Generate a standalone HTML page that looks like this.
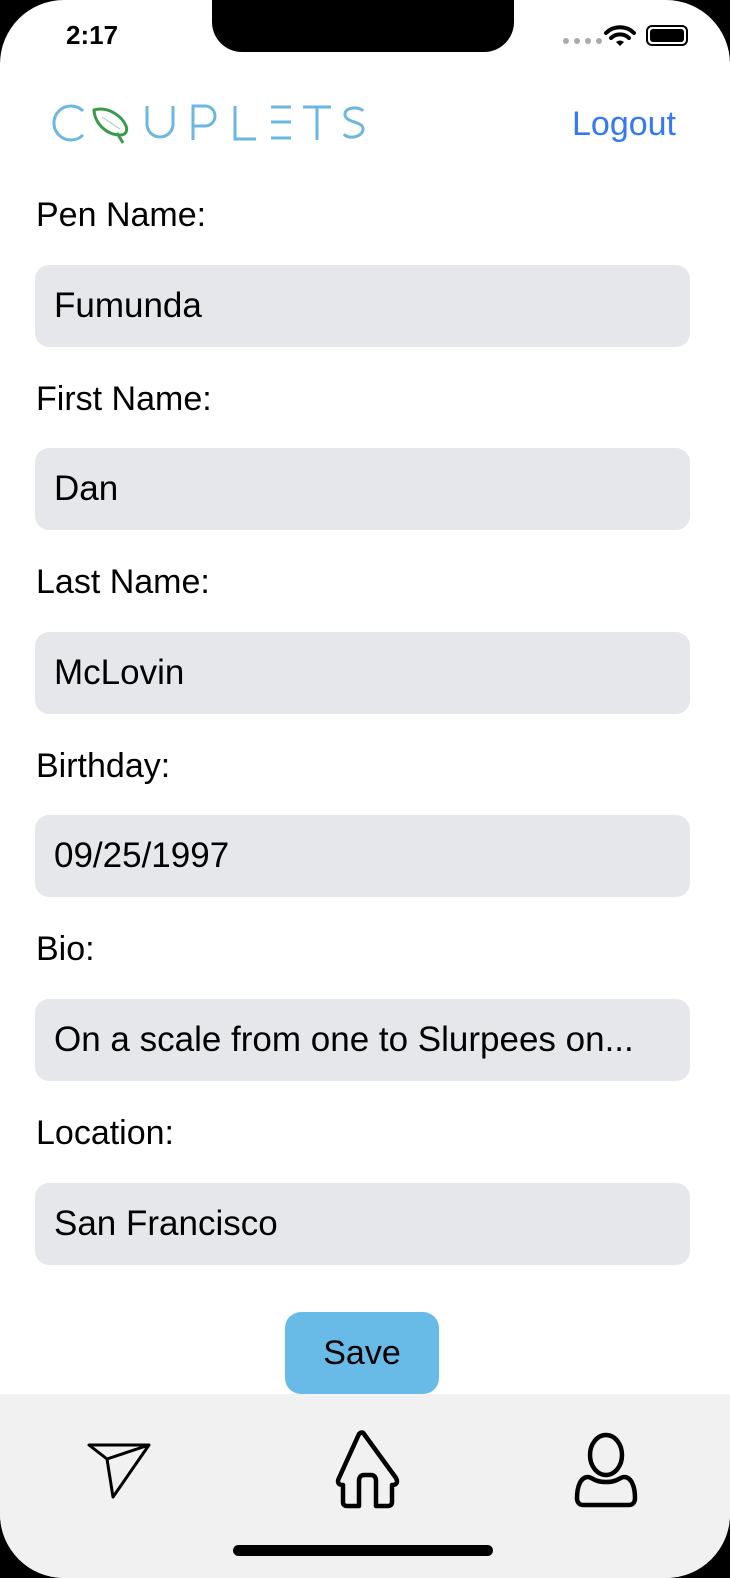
<!DOCTYPE html>
<html><head><meta charset="utf-8"><style>
*{margin:0;padding:0;box-sizing:border-box}
html,body{width:730px;height:1578px;background:#000;overflow:hidden}
.screen{position:absolute;left:0;top:0;width:730px;height:1578px;background:#fff;border-radius:64px;overflow:hidden;font-family:"Liberation Sans",sans-serif}
.notch{position:absolute;left:212px;top:-2px;width:302px;height:54px;background:#000;border-radius:0 0 30px 30px}
.time{position:absolute;left:66px;top:20px;font-size:26px;font-weight:bold;color:#000}
.lbl{position:absolute;left:36px;font-size:34px;color:#000}
.fld{position:absolute;left:35px;width:655px;height:82px;background:#e6e7ea;border-radius:14px;font-size:35px;color:#000;padding-left:19px;line-height:82px;white-space:nowrap}
.logout{position:absolute;left:572px;top:105px;font-size:34px;color:#3478f6}
.save{position:absolute;left:285px;top:1312px;width:154px;height:82px;background:#68bbe6;border-radius:16px;font-size:34px;line-height:82px;text-align:center;color:#000}
.tab{position:absolute;left:0;top:1394px;width:730px;height:184px;background:#f1f1f1}
.bar{position:absolute;left:233px;top:1545px;width:260px;height:11px;background:#000;border-radius:6px}
</style></head><body><div class="screen">
<div class="notch"></div>
<div class="time">2:17</div>
<div style="position:absolute;left:563px;top:38px;display:flex;gap:5px"><i style="width:6px;height:6px;background:#aaa;border-radius:3px"></i><i style="width:6px;height:6px;background:#aaa;border-radius:3px"></i><i style="width:6px;height:6px;background:#aaa;border-radius:3px"></i><i style="width:6px;height:6px;background:#aaa;border-radius:3px"></i></div>
<svg style="position:absolute;left:604px;top:24px" width="32" height="24" viewBox="0 0 32 24"><path d="M2 9a20 20 0 0 1 28 0" stroke="#000" stroke-width="4" fill="none" stroke-linecap="round"/><path d="M7 14a13 13 0 0 1 18 0" stroke="#000" stroke-width="4" fill="none" stroke-linecap="round"/><path d="M16 22l-4-4a6 6 0 0 1 8 0z" fill="#000"/></svg>
<div style="position:absolute;left:646px;top:25px;width:42px;height:21px;border:2px solid #000;border-radius:6px;padding:2px"><div style="width:100%;height:100%;background:#000;border-radius:3px"></div></div>
<svg style="position:absolute;left:0;top:0" width="400" height="160" viewBox="0 0 400 160">
<g fill="none" stroke="#6db6e2" stroke-width="3">
<path d="M83 111a17 17 0 1 0 0 24"/>
<path d="M147 106v18a13 13 0 0 0 26 0V106"/>
<path d="M193 140V106h12a10 10 0 0 1 0 20h-12"/>
<path d="M235 106v33h21"/>
<path d="M271 107h20M271 122h20M271 138h20"/>
<path d="M303 107h28M317 107v33"/>
<path d="M363 111c-4-5-19-4-18 4s18 6 18 14-15 11-19 5"/>
</g>
<path d="M94 110c14-4 28 6 32 16 2 6-1 9-6 9-12 0-25-10-26-25z M117 133l6 10" fill="none" stroke="#3a9a48" stroke-width="3"/>
<path d="M102 117l18 12" stroke="#9fcfa6" stroke-width="1"/>
</svg>
<div class="logout">Logout</div>
<div class="lbl" style="top:196px">Pen Name:</div><div class="fld" style="top:265px">Fumunda</div>
<div class="lbl" style="top:380px">First Name:</div><div class="fld" style="top:448px">Dan</div>
<div class="lbl" style="top:563px">Last Name:</div><div class="fld" style="top:632px">McLovin</div>
<div class="lbl" style="top:747px">Birthday:</div><div class="fld" style="top:815px">09/25/1997</div>
<div class="lbl" style="top:930px">Bio:</div><div class="fld" style="top:999px">On a scale from one to Slurpees on...</div>
<div class="lbl" style="top:1114px">Location:</div><div class="fld" style="top:1183px">San Francisco</div>
<div class="tab"></div>
<div class="save">Save</div>
<svg style="position:absolute;left:0;top:1420px" width="730" height="100" viewBox="0 1420 730 100">
<path d="M89 1445h60l-36 52-6-38z M107 1459l42-14" fill="none" stroke="#000" stroke-width="3" stroke-linejoin="round"/>
<path d="M359 1434c2-2 4-2 5 0l32 44c2 4 1 7-4 7v17c0 3-2 4-4 4h-12v-25c0-4-2-6-5-6h-7c-3 0-5 2-5 6v25h-12c-2 0-4-1-4-4v-17c-5 0-6-3-4-7z" fill="none" stroke="#000" stroke-width="4.5" stroke-linejoin="round"/>
<ellipse cx="606" cy="1455" rx="16" ry="20" fill="none" stroke="#000" stroke-width="4.5"/>
<path d="M588 1477c-8 0-11 11-11 21 0 4 2 7 6 7h46c4 0 6-3 6-7 0-10-3-21-11-21-4 0-6 5-18 5s-14-5-18-5z" fill="none" stroke="#000" stroke-width="4.5"/>
</svg>
<div class="bar"></div>
</div></body></html>
